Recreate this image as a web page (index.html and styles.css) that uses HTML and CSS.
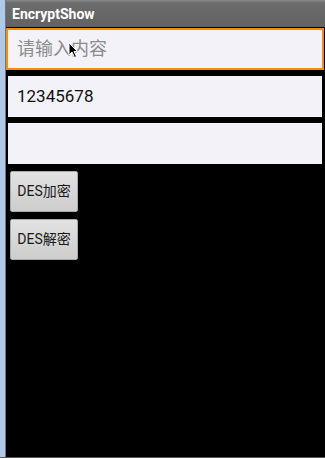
FILE: index.html
```html
<!DOCTYPE html>
<html lang="zh-CN">
<head>
    <meta charset="UTF-8">
    <meta name="viewport" content="width=device-width, initial-scale=1.0">
    <title>EncryptShow</title>
    <link rel="stylesheet" href="styles.css">
</head>
<body>
    <div class="screen">
        <div class="side"></div>
        <div class="app">
            <div class="titlebar">EncryptShow</div>

            <div class="field focused">
                <span class="hint">请输入内容</span>
                <svg class="pointer" width="10" height="17" viewBox="0 0 10 17">
                    <path d="M1 1 L1 13 L4 10 L6.5 15.5 L8.5 14.5 L6 9.5 L9.5 9.5 Z" fill="#000" stroke="#fff" stroke-width="1"/>
                </svg>
            </div>
            <div class="field">12345678</div>
            <div class="field"></div>

            <div class="btn">DES加密</div>
            <div class="btn">DES解密</div>
        </div>
    </div>
</body>
</html>
```

FILE: styles.css
```css
body {
    margin: 0;
    padding: 0;
    background: #000;
    font-family: Roboto, "Noto Sans CJK SC", sans-serif;
}

.screen {
    display: flex;
    height: 458px;
    border-bottom: 1px solid #555;
    box-sizing: border-box;
}

.side {
    width: 5px;
    background: #afc9e6;
    border-right: 1px solid #6e7680;
}

.app {
    flex: 1;
    display: flex;
    flex-direction: column;
    align-items: flex-start;
}

.titlebar {
    align-self: stretch;
    height: 27px;
    box-sizing: border-box;
    padding: 5px 0 0 6px;
    background: linear-gradient(#8a8a8a 0, #6c6c6c 3px, #626262 100%);
    color: #fff;
    font-size: 14px;
    font-weight: bold;
    line-height: 18px;
}

.field {
    position: relative;
    align-self: stretch;
    height: 41px;
    margin: 6px 3px 0 2px;
    padding-left: 9px;
    background: #f3f2f8;
    color: #111;
    font-size: 17px;
    line-height: 41px;
}

.field.focused {
    height: 42px;
    margin: 1px 1px 0 0;
    padding-left: 9px;
    border: 2px solid #ff8a00;
    box-sizing: border-box;
    line-height: 38px;
}

.hint {
    color: #8c8c8c;
    font-size: 18px;
}

.pointer {
    position: absolute;
    left: 60px;
    top: 12px;
}

.field + .field {
    margin-top: 6px;
}

.btn {
    width: 68px;
    height: 41px;
    margin: 7px 0 0 4px;
    box-sizing: border-box;
    border: 1px solid #aaa;
    border-radius: 2px;
    background: linear-gradient(#e2e2e2, #cdcdcd);
    color: #1a1a1a;
    font-size: 14px;
    line-height: 39px;
    text-align: center;
}
```
